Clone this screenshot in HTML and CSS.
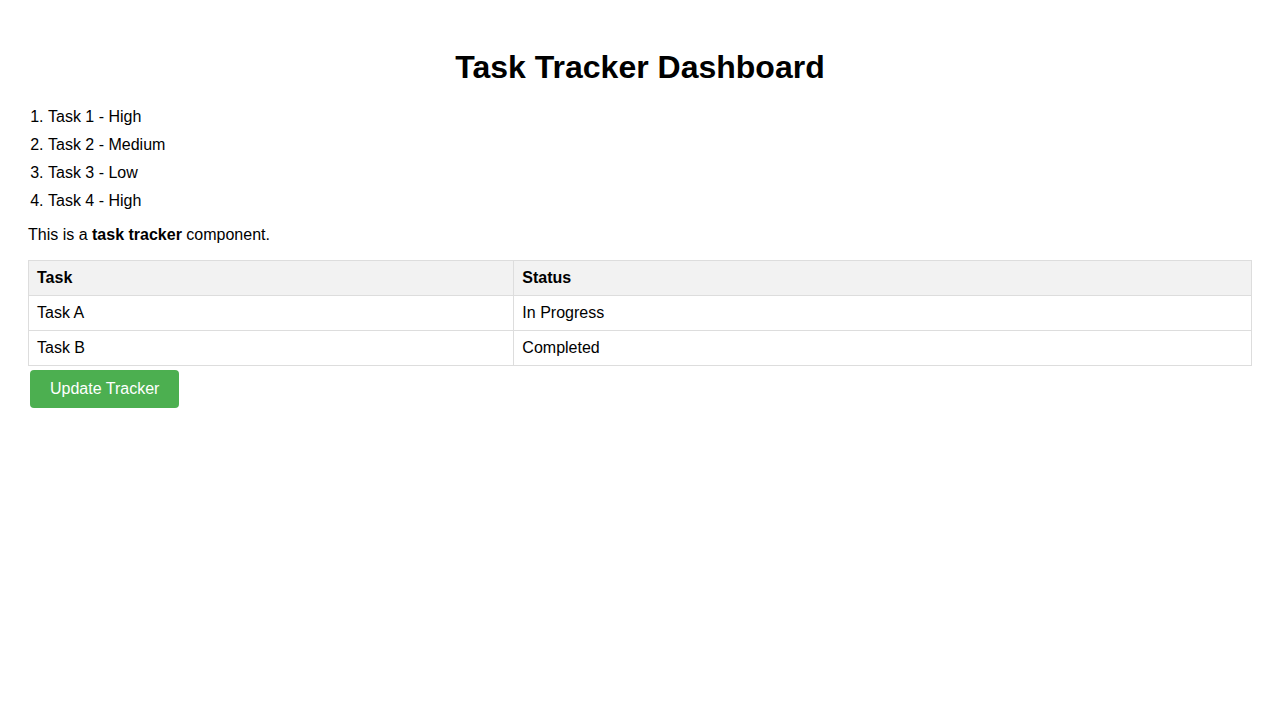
FILE: index.html
```html
<!DOCTYPE html>
<html>
<head>
<meta charset="utf-8">
<title>Task Tracker Dashboard</title>
<link rel="stylesheet" href="styles.css">
</head>
<body>
<div class="app">
  <h1 class="title">Task Tracker Dashboard</h1>
  <ol class="tasks">
    <li>Task 1 - High</li>
    <li>Task 2 - Medium</li>
    <li>Task 3 - Low</li>
    <li>Task 4 - High</li>
  </ol>
  <p class="desc">This is a <strong>task tracker</strong> component.</p>
  <table class="tracker">
    <thead>
      <tr><th>Task</th><th>Status</th></tr>
    </thead>
    <tbody>
      <tr><td>Task A</td><td>In Progress</td></tr>
      <tr><td>Task B</td><td>Completed</td></tr>
    </tbody>
  </table>
  <button class="btn">Update Tracker</button>
</div>
</body>
</html>
```
FILE: styles.css
```css
body {
  margin: 8px;
  font-family: "Liberation Sans", Arial, sans-serif;
  font-size: 16px;
  color: #000;
  background: #fff;
}
.app {
  padding: 20px;
}
.title {
  text-align: center;
  font-size: 32px;
  margin: 21px 0 22px;
}
.tasks {
  margin: 16px 0;
  padding-left: 20px;
}
.tasks li {
  margin-bottom: 10px;
}
.desc {
  margin: 16px 0;
}
.tracker {
  width: 100%;
  border-collapse: collapse;
  margin-top: 16px;
}
.tracker th,
.tracker td {
  border: 1px solid #ddd;
  padding: 8px;
  text-align: left;
}
.tracker th {
  background: #f2f2f2;
}
.btn {
  margin: 4px 0 0 2px;
  padding: 10px 20px;
  background: #4caf50;
  color: #fff;
  border: none;
  border-radius: 4px;
  font-family: "Liberation Sans", Arial, sans-serif;
  font-size: 16px;
}
```
